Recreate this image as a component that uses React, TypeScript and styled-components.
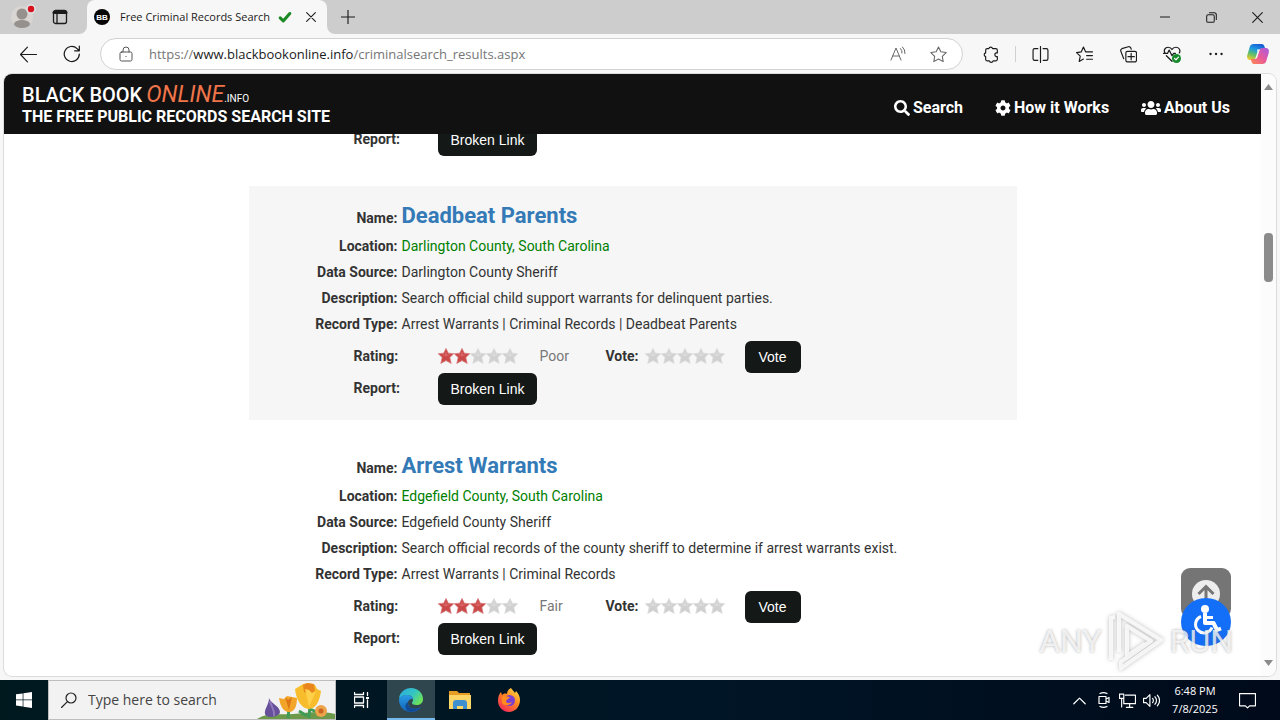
import React from "react";
import styled, { createGlobalStyle, css } from "styled-components";
import { FaSearch, FaCog, FaUsers } from "react-icons/fa";

const ui = `"Open Sans", "Noto Sans", sans-serif`;

const GlobalStyle = createGlobalStyle`
  *, *::before, *::after { box-sizing: border-box; }
  body { margin: 0; background: #f7f7f7; color: #333; font: 14px/20px Roboto, sans-serif; }
  button, input { font: inherit; color: inherit; margin: 0; }
  svg { display: block; flex: none; }
`;

const Desktop = styled.div`
  display: flex;
  flex-direction: column;
  height: 100vh;
  overflow: hidden;
`;

/* ---------- browser chrome ---------- */

const IconButton = styled.button<{ $w?: number; $push?: boolean }>`
  display: flex;
  align-items: center;
  justify-content: center;
  flex: none;
  width: ${(p) => p.$w ?? 44}px;
  height: 32px;
  padding: 0;
  border: 0;
  background: none;
  color: #1b1b1b;
  ${(p) => p.$push && css`margin-left: auto;`}
`;

const TitleBar = styled.header`
  display: flex;
  flex: none;
  height: 34px;
  background: #f7f7f7;
`;

const TitleSide = styled.div<{ $grow?: boolean }>`
  display: flex;
  align-items: center;
  background: #cdcdcd;
  ${(p) =>
    p.$grow
      ? css`flex: 1; border-bottom-left-radius: 8px;`
      : css`width: 87px; padding-left: 4px; border-bottom-right-radius: 8px;`}
`;

const TabBack = styled.div`
  display: flex;
  flex: none;
  background: #cdcdcd;
`;

const Tab = styled.div`
  display: flex;
  align-items: center;
  width: 240px;
  padding: 0 4px 0 7px;
  border-radius: 8px 8px 0 0;
  background: #f7f7f7;
  color: #1b1b1b;
  font: 11px/16px ${ui};
  white-space: nowrap;
`;

const TabTitle = styled.span`
  margin: 0 8px 0 10px;
`;

const TabRule = styled.span`
  width: 1px;
  height: 14px;
  margin-left: 6px;
  background: #e4e4e4;
`;

const Toolbar = styled.nav`
  display: flex;
  align-items: center;
  flex: none;
  height: 40px;
  padding: 0 2px 0 6px;
`;

const Address = styled.div`
  display: flex;
  align-items: center;
  flex: 1;
  height: 32px;
  margin: 0 6px;
  padding: 0 4px;
  border: 1px solid #d2d2d2;
  border-radius: 16px;
  background: #fff;
  color: #777;
  font: 13px/20px ${ui};
`;

const Url = styled.a`
  flex: 1;
  margin-left: 2px;
  color: #767676;
  text-decoration: none;
  white-space: nowrap;
`;

const Host = styled.span`
  color: #1b1b1b;
`;

const ToolRule = styled.span`
  width: 1px;
  height: 16px;
  margin: 0 2px;
  background: #d0d0d0;
`;

/* ---------- web page ---------- */

const Frame = styled.div`
  display: flex;
  flex: 1;
  min-height: 0;
  margin: 0 4px 4px;
  border-radius: 8px;
  overflow: hidden;
  background: #fff;
  box-shadow: 0 0 0 1px #dcdcdc;
`;

const Page = styled.div`
  position: relative;
  flex: 1;
  min-width: 0;
  overflow: hidden;
`;

const SiteHeader = styled.header`
  position: relative;
  z-index: 1;
  display: flex;
  align-items: center;
  justify-content: space-between;
  height: 60px;
  padding: 2px 31px 0 18px;
  background: #111;
  color: #fff;
  font-size: 16px;
  font-weight: 700;
  white-space: nowrap;
`;

const Logo = styled.div`
  display: flex;
  align-items: baseline;
  height: 24px;
  font: 500 20px/24px Roboto, sans-serif;
`;

const Online = styled.em`
  margin-left: 4px;
  color: #f0754a;
  font-size: 23px;
  font-weight: 400;
`;

const Info = styled.small`
  font-size: 10px;
  font-weight: 400;
`;

const Tagline = styled.div`
  line-height: 20px;
`;

const SiteNav = styled.nav`
  display: flex;
  gap: 32px;
  margin-top: 6px;
`;

const NavLink = styled.a`
  display: flex;
  align-items: center;
  gap: 3px;
  color: #fff;
  text-decoration: none;
`;

const Results = styled.main`
  display: flex;
  flex-direction: column;
  align-items: center;
  gap: 16px;
  margin-top: -14px;
`;

const Card = styled.article<{ $shaded?: boolean; $cut?: boolean }>`
  width: 100%;
  max-width: 768px;
  padding: ${(p) => (p.$cut ? "0 0 14px" : "15px 0")};
  background: ${(p) => (p.$shaded ? "#f6f6f6" : "#fff")};
`;

const Field = styled.div<{ $title?: boolean }>`
  display: grid;
  grid-template-columns: 149px 1fr;
  column-gap: 4px;
  align-items: baseline;
  line-height: ${(p) => (p.$title ? 30 : 26)}px;
`;

const Label = styled.span<{ $right?: boolean }>`
  font-weight: 700;
  text-align: ${(p) => (p.$right ? "right" : "left")};
`;

const Title = styled.a`
  color: #337ab7;
  font-size: 22px;
  font-weight: 700;
  text-decoration: none;
`;

const Place = styled.span`
  color: #008000;
`;

const Controls = styled.div`
  display: grid;
  grid-template-columns: 84px 102px 66px 39px 100px auto;
  grid-auto-rows: 32px;
  justify-content: start;
  justify-items: start;
  align-items: center;
  padding: 4px 0 0 105px;

  > span, > div { padding-bottom: 2px; }
`;

const Verdict = styled.span`
  color: #777;
`;

const DarkButton = styled.button`
  min-width: 56px;
  height: 32px;
  padding: 0 13px;
  border: 0;
  border-radius: 6px;
  background: #141817;
  color: #fff;
  font: 14px/32px "Liberation Sans", Arial, sans-serif;
  white-space: nowrap;
`;

const StarRow = styled.div`
  display: flex;
`;

const StarChoice = styled.label`
  position: relative;
  display: block;
`;

const StarInput = styled.input`
  position: absolute;
  inset: 0;
  width: 16px;
  height: 16px;
  opacity: 0;
`;

const ScrollTrack = styled.div`
  display: flex;
  flex-direction: column;
  align-items: center;
  flex: none;
  width: 15px;
  padding: 10px 0;
  background: #fcfcfc;
`;

const Thumb = styled.div`
  width: 9px;
  height: 49px;
  margin: 143px 0 auto;
  border-radius: 4px;
  background: #8b8b8b;
`;

const ToTop = styled.button`
  position: absolute;
  right: 30px;
  bottom: 58px;
  display: flex;
  justify-content: center;
  width: 50px;
  height: 50px;
  padding: 12px 0 0;
  border: 0;
  border-radius: 9px;
  background: #757575;
`;

const Access = styled.button`
  position: absolute;
  right: 30px;
  bottom: 30px;
  width: 50px;
  height: 48px;
  padding: 0;
  border: 0;
  border-radius: 50%;
  background: #146ff8;
  color: #fff;
`;

const Watermark = styled.div`
  position: absolute;
  right: 28px;
  bottom: 4px;
  display: flex;
  align-items: center;
  gap: 5px;
  color: rgba(255, 255, 255, 0.75);
  font: 32px/62px Roboto, sans-serif;
  text-shadow: 0 0 3px rgba(90, 90, 90, 0.5);
  pointer-events: none;
`;

const PlayMark = styled.svg`
  filter: drop-shadow(0 0 2px rgba(90, 90, 90, 0.5));
`;

/* ---------- taskbar ---------- */

const Taskbar = styled.footer`
  display: flex;
  flex: none;
  height: 40px;
  background: linear-gradient(90deg, #00191f, #001526 55%, #000a1a);
  color: #fff;
  font: 11px/18px ${ui};
`;

const TaskButton = styled.button<{ $active?: boolean; $w?: number }>`
  display: flex;
  align-items: center;
  justify-content: center;
  width: ${(p) => p.$w ?? 49}px;
  padding: 0;
  border: 0;
  background: ${(p) => (p.$active ? "#30464e" : "none")};
  box-shadow: ${(p) => (p.$active ? "inset 0 -2px #76b9ed" : "none")};
`;

const SearchBox = styled.label`
  display: flex;
  align-items: center;
  width: 288px;
  padding-left: 12px;
  border: 1px solid #bdbdbd;
  background: #f2f2f2;
  color: #222;
`;

const SearchInput = styled.input`
  flex: 1;
  min-width: 0;
  margin-left: 11px;
  padding: 0;
  border: 0;
  outline: 0;
  background: none;
  font: 14px/20px ${ui};
  &::placeholder { color: #444; opacity: 1; }
`;

const Tray = styled.div`
  display: flex;
  align-items: center;
  margin-left: auto;
  padding-right: 21px;
`;

const TrayButton = styled.button`
  display: flex;
  justify-content: center;
  width: 24px;
  padding: 0;
  border: 0;
  background: none;
`;

const Clock = styled.time`
  width: 64px;
  margin-right: 8px;
  text-align: center;
  white-space: nowrap;
`;

/* ---------- drawings ---------- */

type LineProps = { d: string; size?: number; w?: number; color?: string; children?: React.ReactNode };

function Line({ d, size = 16, w = 1, color = "currentColor", children }: LineProps) {
  return (
    <svg width={size} height={size} viewBox="0 0 16 16" fill="none" stroke={color} strokeWidth={w} strokeLinecap="round" strokeLinejoin="round" aria-hidden="true">
      <path d={d} />
      {children}
    </svg>
  );
}

function Star({ on }: { on?: boolean }) {
  return (
    <svg width="16" height="16" viewBox="0 0 16 16" aria-hidden="true">
      <path d="M8 .4 10.3 5.200 15.700 5.700 11.800 9.500 13.200 15.400 8 12.600 2.800 15.400 4.200 9.500.3 5.700 5.700 5.200Z" fill={on ? "#cb4848" : "#d0d0d0"} stroke={on ? "#d67a7a" : "#dcdcdc"} strokeWidth=".8" />
      <path d="M8 3 9.200 6.500 12.500 6.800 8 8.400 3.500 6.800 6.800 6.500Z" fill={on ? "#d96262" : "#dadada"} />
    </svg>
  );
}

function Avatar() {
  return (
    <svg width="26" height="28" viewBox="0 0 26 28" aria-hidden="true">
      <circle cx="12" cy="14" r="11" fill="#d8d5d2" />
      <circle cx="12" cy="11" r="5.5" fill="#96918c" />
      <ellipse cx="12" cy="21" rx="8" ry="4" fill="#96918c" />
      <circle cx="21" cy="6" r="5" fill="#dedede" />
      <circle cx="21" cy="6" r="3.2" fill="#d9121f" />
    </svg>
  );
}

function Copilot() {
  return (
    <svg width="24" height="24" viewBox="0 0 24 24" aria-hidden="true">
      <defs>
        <linearGradient id="cpA" x1=".6" y1="0" x2=".2" y2="1"><stop offset="0" stopColor="#1a5fd8" /><stop offset=".35" stopColor="#1d9be0" /><stop offset=".65" stopColor="#5fbf6a" /><stop offset="1" stopColor="#f3c92b" /></linearGradient>
        <linearGradient id="cpB" x1="1" y1="0" x2="0" y2="1"><stop offset="0" stopColor="#a45be0" /><stop offset=".5" stopColor="#e8599c" /><stop offset="1" stopColor="#ff8a4c" /></linearGradient>
      </defs>
      <path d="M7.500 2h8.200c1.600 0 2.300 1 2.800 2.600L19.300 7H16c-2 0-3 1-3.600 3l-1.600 5.500c-.5 1.700-1.500 2.500-3.200 2.500H4.400C1.600 18 .6 15.800 1.300 13L3.800 4.800C4.400 3 5.600 2 7.500 2Z" fill="url(#cpA)" />
      <path d="M16.500 22H8.300c-1.600 0-2.300-1-2.800-2.600L4.700 17H8c2 0 3-1 3.600-3l1.600-5.500C13.700 6.800 14.700 6 16.400 6h3.200c2.800 0 3.800 2.200 3.100 5l-2.500 8.200c-.6 1.800-1.800 2.800-3.700 2.800Z" fill="url(#cpB)" />
      <path d="M11 7.500h3.300c-.7.500-1 1.200-1.300 2.200L11.300 15c-.3 1-.7 1.500-1.400 1.700H8.500c.9-.5 1.200-1.200 1.500-2.200l1.500-5Z" fill="#f7f7f7" />
    </svg>
  );
}

function Flowers() {
  return (
    <svg width="78" height="38" viewBox="0 0 78 38" aria-hidden="true">
      <path d="M0 38C10 31 22 34 36 33S62 29 78 33V38Z" fill="#6d9a4a" />
      <path d="M31 37 32 28M52 37 53 24M62 32 53 28M42 30 50 35" stroke="#3f9b56" strokeWidth="3" fill="none" />
      <path d="M12 17C13 22 23 25 23 31 23 36 9 38 8 33 7 28 12 24 12 17Z" fill="#67509a" />
      <path d="M13 20C14 26 18 28 17 35" stroke="#8e78bd" fill="none" strokeWidth="2" />
      <path d="m22 17 5 1 3-3 5 1 5 1c0 7-2 14-8 14-6 0-9-7-10-14Z" fill="#f3a52a" />
      <path d="m28 16 3 3 4-3-3 13Z" fill="#dd7615" />
      <path d="m38 8 5-3 3-2 6-1 6 2 2 4 4 2c-1 9-5 18-12 18S39 19 38 8Z" fill="#f7bd2c" />
      <path d="m46 4 4-2 7 1 1 7-5 4-6-3Z" fill="#e9861d" />
      <path d="m48 8 4 18 7-16-4 2-3-3Z" fill="#ffd04a" />
      <circle cx="64" cy="30" r="6" fill="#eda34a" />
      <circle cx="64" cy="30" r="2.500" fill="#c8641f" />
    </svg>
  );
}

function EdgeLogo() {
  return (
    <svg width="26" height="26" viewBox="0 0 26 26" aria-hidden="true">
      <defs>
        <linearGradient id="eg1" x1="0" y1="0" x2="1" y2=".6"><stop offset="0" stopColor="#2aa9e0" /><stop offset=".6" stopColor="#34c6c0" /><stop offset="1" stopColor="#6be25a" /></linearGradient>
        <linearGradient id="eg2" x1="0" y1="0" x2="0" y2="1"><stop offset="0" stopColor="#2a9be6" /><stop offset="1" stopColor="#1163b5" /></linearGradient>
      </defs>
      <path d="M1 12C1.500 5 7 1 13 1c7 0 12 5 12 11 0 4-3 6-6.500 6-3 0-4.500-1-4.500-2s1-1.500 1-3.500C15 10 12.500 8 9.500 8 5 8 1.500 10.500 1 12Z" fill="url(#eg1)" />
      <path d="M1 13c0-3.500 4-5 8-5 3.500 0 6 2 6 4.500-1-1-5-.5-5 3.500 0 5 5 7.500 13 4-2 3-5.500 5-10 5C6 25 1 19.500 1 13Z" fill="url(#eg2)" />
      <path d="M10 15c-1 5 4 9 13 5-4 4.500-9 5.500-12 4.500C7 23 6 17 10 15Z" fill="#124a94" />
    </svg>
  );
}

function FolderLogo() {
  return (
    <svg width="22" height="20" viewBox="0 0 22 20" aria-hidden="true">
      <path d="M0 1h8l2 2h11v4H0Z" fill="#e69d24" />
      <path d="M0 5h22v14H0Z" fill="#fbd667" />
      <path d="M4 19v-6c0-2 1-3 3-3h8c2 0 3 1 3 3v6h-4v-3H8v3Z" fill="#3f8fd0" />
    </svg>
  );
}

function FirefoxLogo() {
  return (
    <svg width="24" height="24" viewBox="0 0 24 24" aria-hidden="true">
      <defs>
        <linearGradient id="ff" x1=".9" y1="0" x2=".2" y2="1"><stop offset="0" stopColor="#ffe14a" /><stop offset=".45" stopColor="#ff8a1f" /><stop offset="1" stopColor="#f2255c" /></linearGradient>
      </defs>
      <path d="M14 0c1 2 3 3 4 5l1-2c2 2 4 5 4 9 0 7-5 12-11 12S1 19 1 13c0-4 1-7 3-9l1 3c1-1 3-2 5-1 0-3 2-5 4-6Z" fill="url(#ff)" />
      <circle cx="12.500" cy="12.500" r="5.500" fill="#7b3fd1" />
      <path d="M5 9c3-2 5 0 8 0-1 2-3 2-4 4 0 2 3 3 6 1-1 3-7 5-10 1Z" fill="#ff8c1e" />
    </svg>
  );
}

/* ---------- parts ---------- */

type RecordItem = { name: string; place: string; source: string; text: string; types: string; stars: number; verdict: string; shaded?: boolean };

const records: RecordItem[] = [
  { name: "Deadbeat Parents", place: "Darlington County, South Carolina", source: "Darlington County Sheriff", text: "Search official child support warrants for delinquent parties.", types: "Arrest Warrants | Criminal Records | Deadbeat Parents", stars: 2, verdict: "Poor", shaded: true },
  { name: "Arrest Warrants", place: "Edgefield County, South Carolina", source: "Edgefield County Sheriff", text: "Search official records of the county sheriff to determine if arrest warrants exist.", types: "Arrest Warrants | Criminal Records", stars: 3, verdict: "Fair" },
];

const five = [1, 2, 3, 4, 5];

function Record({ item }: { item: RecordItem }) {
  return (
    <Card $shaded={item.shaded}>
      <Field $title><Label $right>Name:</Label><Title href="#">{item.name}</Title></Field>
      <Field><Label $right>Location:</Label><Place>{item.place}</Place></Field>
      <Field><Label $right>Data Source:</Label><span>{item.source}</span></Field>
      <Field><Label $right>Description:</Label><span>{item.text}</span></Field>
      <Field><Label $right>Record Type:</Label><span>{item.types}</span></Field>
      <Controls>
        <Label>Rating:</Label>
        <StarRow>{five.map((n) => <Star key={n} on={n <= item.stars} />)}</StarRow>
        <Verdict>{item.verdict}</Verdict>
        <Label>Vote:</Label>
        <StarRow role="radiogroup" aria-label="Vote">
          {five.map((n) => (
            <StarChoice key={n}><StarInput type="radio" name={item.name} aria-label={`${n} stars`} /><Star /></StarChoice>
          ))}
        </StarRow>
        <DarkButton type="button">Vote</DarkButton>
        <Label>Report:</Label>
        <DarkButton type="button">Broken Link</DarkButton>
      </Controls>
    </Card>
  );
}

export default function App() {
  return (
    <Desktop>
      <GlobalStyle />
      <TitleBar>
        <TitleSide>
          <IconButton $w={38} aria-label="Profile"><Avatar /></IconButton>
          <IconButton $w={36} aria-label="Tab actions">
            <Line size={16} w={1.3} d="M3.500 1.500h9a2 2 0 0 1 2 2v9a2 2 0 0 1-2 2h-9a2 2 0 0 1-2-2v-9a2 2 0 0 1 2-2ZM5 5v9"><path d="M2 3.500h12" strokeWidth="3" /></Line>
          </IconButton>
        </TitleSide>
        <TabBack>
          <Tab>
            <svg width="16" height="16" viewBox="0 0 16 16" aria-hidden="true">
              <circle cx="8" cy="8" r="8" fill="#050505" />
              <text x="8" y="11" fontSize="8" fontWeight="700" fontFamily="Liberation Sans" textAnchor="middle" fill="#fff">BB</text>
            </svg>
            <TabTitle>Free Criminal Records Search</TabTitle>
            <Line size={14} w={3.5} color="#1c8a24" d="m2.500 9 3.500 3.500L13.500 4" />
            <TabRule />
            <IconButton $w={26} aria-label="Close tab"><Line size={10} w={1.7} d="m1 1 14 14M15 1 1 15" /></IconButton>
          </Tab>
        </TabBack>
        <TitleSide $grow>
          <IconButton $w={42} aria-label="New tab"><Line size={14} w={1.3} d="M8 0v16M0 8h16" /></IconButton>
          <IconButton $w={46} $push aria-label="Minimize"><Line size={10} w={1.6} d="M0 8h16" /></IconButton>
          <IconButton $w={46} aria-label="Restore"><Line size={11} w={1.5} d="M3 4h7a2 2 0 0 1 2 2v7a2 2 0 0 1-2 2H3a2 2 0 0 1-2-2V6a2 2 0 0 1 2-2ZM5 1h7a3 3 0 0 1 3 3v7" /></IconButton>
          <IconButton $w={46} aria-label="Close"><Line size={11} w={1.6} d="m1 1 14 14M15 1 1 15" /></IconButton>
        </TitleSide>
      </TitleBar>

      <Toolbar>
        <IconButton aria-label="Back"><Line size={17} w={1.1} d="M15.500 8H.5M7 1 .5 8 7 15" /></IconButton>
        <IconButton aria-label="Refresh"><Line size={18} w={1.1} d="M14.500 8A6.700 6.700 0 1 1 12.500 3.200L14.300 5M14.500 1v4.200h-4.200" /></IconButton>
        <Address>
          <IconButton $w={42} aria-label="Site information"><Line size={16} color="#555" d="M3.500 6h9a1.500 1.500 0 0 1 1.500 1.500v6a1.500 1.500 0 0 1-1.500 1.500h-9A1.500 1.500 0 0 1 2 13.500v-6A1.500 1.500 0 0 1 3.500 6ZM5 6V4a3 3 0 0 1 6 0v2M8 10.400v.2" /></IconButton>
          <Url href="#">https://<Host>www.blackbookonline.info</Host>/criminalsearch_results.aspx</Url>
          <IconButton $w={40} aria-label="Read aloud"><Line size={16} color="#666" d="M1 14 6 2l5 12M2.800 10h6.400M10.500 2.500a5 5 0 0 1 1.500 4.500M12.500 1a8 8 0 0 1 2.500 6.500" /></IconButton>
          <IconButton $w={40} aria-label="Favorite"><Line size={17} color="#666" d="M8 1 10.200 5.500 15.200 6.200 11.600 9.700 12.400 14.700 8 12.300 3.600 14.700 4.400 9.700.8 6.200 5.800 5.500Z" /></IconButton>
        </Address>
        <IconButton aria-label="Extensions"><Line size={17} w={1.1} d="M4 2.500h1.500a1.800 1.800 0 0 1 3.500 0h3A1.500 1.500 0 0 1 13.500 4v2.500h-1a1.800 1.800 0 0 0 0 3.500h1v2.500A1.500 1.500 0 0 1 12 14H9.500a1.800 1.800 0 0 1-3.500 0H4a1.500 1.500 0 0 1-1.500-1.500V10a1.800 1.800 0 0 1 0-3.500V4A1.500 1.500 0 0 1 4 2.500Z" /></IconButton>
        <ToolRule />
        <IconButton aria-label="Split screen"><Line size={17} w={1.1} d="M5.500 2.500h-3a1.500 1.500 0 0 0-1.500 1.500v8a1.500 1.500 0 0 0 1.500 1.500h3M10.500 2.500h3A1.500 1.500 0 0 1 15 4v8a1.500 1.500 0 0 1-1.500 1.500h-3M8 .5v15" /></IconButton>
        <IconButton aria-label="Favorites"><Line size={17} w={1.1} d="M11 5.500H9L7 1 5 5.500.5 6.200 4 9.500 3 14.500 7 12.300M11 5.500h4.500M10 9h5.500M10 12.500h5.500" /></IconButton>
        <IconButton aria-label="Collections"><Line size={17} w={1.1} d="M7 5h7a1.500 1.500 0 0 1 1.500 1.500v7A1.500 1.500 0 0 1 14 15H7a1.500 1.500 0 0 1-1.500-1.500v-7A1.500 1.500 0 0 1 7 5ZM10.500 7v6M7.500 10h6M3.500 12 .8 5a2 2 0 0 1 1-2.500l6-1.800a2 2 0 0 1 2.500 1.500l.3.800" /></IconButton>
        <IconButton aria-label="Browser essentials">
          <Line size={18} w={1.1} d="M2 7.500C0 4.500 2 2 4.500 2 6.500 2 7.500 3 8 4c.5-1 1.500-2 3.500-2C14 2 16 4.500 14.500 7M.5 7.500H4l1.500-3 2.500 5 1.500-2h1.500M3 9.500l5 5">
            <circle cx="12" cy="12" r="4" fill="#178a2c" stroke="none" /><path d="m10.300 12 1.200 1.200 2.200-2.400" stroke="#fff" />
          </Line>
        </IconButton>
        <IconButton aria-label="Settings"><Line size={16} w={2.3} d="M2.500 8h.1M8 8h.1M13.500 8h.1" /></IconButton>
        <IconButton $w={40} aria-label="Copilot"><Copilot /></IconButton>
      </Toolbar>

      <Frame>
        <Page>
          <SiteHeader>
            <div>
              <Logo>BLACK BOOK<Online>ONLINE</Online><Info>.INFO</Info></Logo>
              <Tagline>THE FREE PUBLIC RECORDS SEARCH SITE</Tagline>
            </div>
            <SiteNav>
              <NavLink href="#"><FaSearch size={16} />Search</NavLink>
              <NavLink href="#"><FaCog size={16} />How it Works</NavLink>
              <NavLink href="#"><FaUsers size={20} />About Us</NavLink>
            </SiteNav>
          </SiteHeader>
          <Results>
            <Card $cut>
              <Controls>
                <Label>Report:</Label>
                <DarkButton type="button">Broken Link</DarkButton>
              </Controls>
            </Card>
            {records.map((r) => <Record key={r.name} item={r} />)}
          </Results>
          <ToTop aria-label="Back to top">
            <svg width="28" height="28" viewBox="0 0 28 28" aria-hidden="true"><circle cx="14" cy="14" r="14" fill="#ededed" /><path d="M14 24V7M6.500 14 14 6.500 21.500 14" fill="none" stroke="#757575" strokeWidth="3" /></svg>
          </ToTop>
          <Access aria-label="Accessibility">
            <svg width="50" height="48" viewBox="0 0 50 48" fill="none" stroke="#fff" strokeWidth="3" strokeLinejoin="round" aria-hidden="true">
              <circle cx="24" cy="11" r="4" fill="#fff" stroke="none" />
              <path d="M24 15V25H32.500L36 32L40 30.500" strokeWidth="4" />
              <path d="M25 19.500H32" />
              <path d="M20 18.500A8.500 8.500 0 1 0 31 29.500" />
            </svg>
          </Access>
          <Watermark>
            ANY
            <PlayMark width="58" height="62" viewBox="0 0 58 62" fill="none" stroke="rgba(255,255,255,.8)" strokeWidth="4" strokeLinejoin="round" aria-hidden="true">
              <path d="M4 50V8L8 7M12 42V4L54 30 14 58V52L44 31 20 16V46L38 34" />
            </PlayMark>
            RUN
          </Watermark>
        </Page>
        <ScrollTrack aria-hidden="true">
          <svg width="9" height="6" viewBox="0 0 9 6"><path d="M0 6 4.500 0 9 6Z" fill="#8b8b8b" /></svg>
          <Thumb />
          <svg width="9" height="6" viewBox="0 0 9 6"><path d="M0 0 4.500 6 9 0Z" fill="#8b8b8b" /></svg>
        </ScrollTrack>
      </Frame>

      <Taskbar>
        <TaskButton $w={48} aria-label="Start">
          <svg width="16" height="16" viewBox="0 0 16 16" fill="#fff" aria-hidden="true"><path d="M0 2.300 6.700 1.400V7.600H0ZM7.400 1.300 16 0V7.600H7.400ZM0 8.300H6.700V14.500L0 13.600ZM7.400 8.300H16V16L7.400 14.700Z" /></svg>
        </TaskButton>
        <SearchBox>
          <Line size={16} w={1.2} d="M15 6A5 5 0 1 1 5 6 5 5 0 0 1 15 6ZM6.400 9.600.5 15.500" />
          <SearchInput type="text" placeholder="Type here to search" aria-label="Search" />
          <Flowers />
        </SearchBox>
        <TaskButton $w={51} aria-label="Task view">
          <Line size={16} w={1.3} d="M.5.500v2h9v-2M.5 5h9v6h-9ZM.5 15.500v-2h9v2M13.500.5v3M13.500 8v7.500"><path d="M13.500 5v2" strokeWidth="3" strokeLinecap="butt" /></Line>
        </TaskButton>
        <TaskButton $w={48} $active aria-label="Edge"><EdgeLogo /></TaskButton>
        <TaskButton aria-label="File Explorer"><FolderLogo /></TaskButton>
        <TaskButton aria-label="Firefox"><FirefoxLogo /></TaskButton>
        <Tray>
          <TrayButton aria-label="Hidden icons"><Line size={13} w={1.5} d="m1 12 7-7 7 7" /></TrayButton>
          <TrayButton aria-label="Camera"><Line size={16} w={1.2} d="M4 4.500h7v7H4ZM11 7l3-1.500v5L11 9M5 1.500c2-1 5-1 7 0M5 14.500c2 1 5 1 7 0" /></TrayButton>
          <TrayButton aria-label="Network"><Line size={17} w={1.1} d="M6 3h9.500v8H4.500V7M7 14.500h6M10 11v3.500M.5 2h4v4h-4ZM2.500 6v8" /></TrayButton>
          <TrayButton aria-label="Volume"><Line size={17} w={1.1} d="M.5 6H3l3.500-3.500v11L3 10H.5ZM9 6c1 1 1 3 0 4M11.200 4.500c2 2 2 5 0 7M13.500 3c2.500 3 2.500 7 0 10" /></TrayButton>
          <Clock>6:48 PM<br />7/8/2025</Clock>
          <TrayButton aria-label="Notifications"><Line size={17} w={1.1} d="M.5 1.500h15v11.500H10L8 15l-2-2H.5Z" /></TrayButton>
        </Tray>
      </Taskbar>
    </Desktop>
  );
}
